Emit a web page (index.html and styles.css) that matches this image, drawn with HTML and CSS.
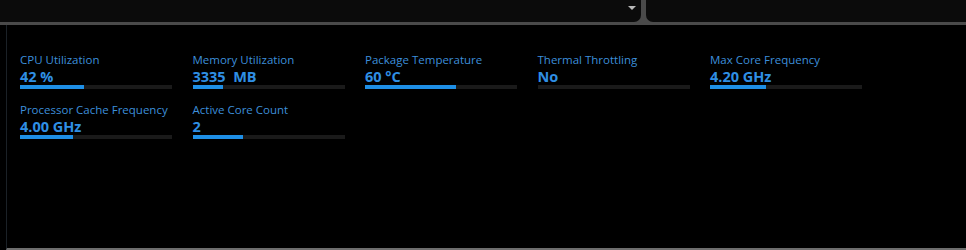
FILE: index.html
```html
<!DOCTYPE html>
<html lang="en">
<head>
	<meta charset="UTF-8">
	<title>Processor Monitor</title>
	<link rel="stylesheet" href="styles.css">
</head>
<body>

	<div class="toolbar">
		<div class="toolbar-panel toolbar-left">
			<span class="dropdown-arrow"></span>
		</div>
		<div class="toolbar-panel toolbar-right"></div>
	</div>

	<div class="main">
		<div class="stats">
			<div class="stat">
				<div class="stat-title">CPU Utilization</div>
				<div class="stat-value">42 %</div>
				<div class="stat-bar"><div class="stat-fill" style="width: 42%"></div></div>
			</div>
			<div class="stat">
				<div class="stat-title">Memory Utilization</div>
				<div class="stat-value">3335&nbsp; MB</div>
				<div class="stat-bar"><div class="stat-fill" style="width: 20%"></div></div>
			</div>
			<div class="stat">
				<div class="stat-title">Package Temperature</div>
				<div class="stat-value">60 °C</div>
				<div class="stat-bar"><div class="stat-fill" style="width: 60%"></div></div>
			</div>
			<div class="stat">
				<div class="stat-title">Thermal Throttling</div>
				<div class="stat-value">No</div>
				<div class="stat-bar"><div class="stat-fill" style="width: 0%"></div></div>
			</div>
			<div class="stat">
				<div class="stat-title">Max Core Frequency</div>
				<div class="stat-value">4.20 GHz</div>
				<div class="stat-bar"><div class="stat-fill" style="width: 37%"></div></div>
			</div>
			<div class="stat">
				<div class="stat-title">Processor Cache Frequency</div>
				<div class="stat-value">4.00 GHz</div>
				<div class="stat-bar"><div class="stat-fill" style="width: 35%"></div></div>
			</div>
			<div class="stat">
				<div class="stat-title">Active Core Count</div>
				<div class="stat-value">2</div>
				<div class="stat-bar"><div class="stat-fill" style="width: 33%"></div></div>
			</div>
		</div>
	</div>

</body>
</html>
```

FILE: styles.css
```css
html, body{
	margin:0;
	padding:0;
	background:#000;
	height:250px;
	overflow:hidden;
	font-family:"Open Sans", "Noto Sans", sans-serif;
}
.toolbar{
	display:flex;
	gap:5px;
	height:22px;
	padding-bottom:3px;
	background:#4a4a4a;
}
.toolbar-panel{
	background:#0b0b0b;
	height:22px;
}
.toolbar-left{
	width:641px;
	border-bottom-right-radius:7px;
	position:relative;
}
.toolbar-right{
	flex:1;
	border-bottom-left-radius:7px;
}
.dropdown-arrow{
	position:absolute;
	left:628px;
	top:6px;
	width:0;
	height:0;
	border-left:4px solid transparent;
	border-right:4px solid transparent;
	border-top:4px solid #b8b8b8;
}
.main{
	height:225px;
	margin-left:6px;
	border-left:1px solid #1b2127;
	border-bottom:2px solid #6e6e6e;
	box-sizing:border-box;
	padding:27px 0 0 13px;
}
.stats{
	display:grid;
	grid-template-columns:repeat(5, 152px);
	column-gap:20.5px;
	row-gap:13px;
}
.stat-title{
	font-size:11.5px;
	line-height:16px;
	color:#3d8fdb;
	white-space:nowrap;
}
.stat-value{
	font-size:14.5px;
	font-weight:bold;
	line-height:17px;
	color:#2f8fe4;
	white-space:nowrap;
}
.stat-bar{
	height:4px;
	background:#1a1a1a;
}
.stat-fill{
	height:100%;
	background:#1e8fe6;
}
```
